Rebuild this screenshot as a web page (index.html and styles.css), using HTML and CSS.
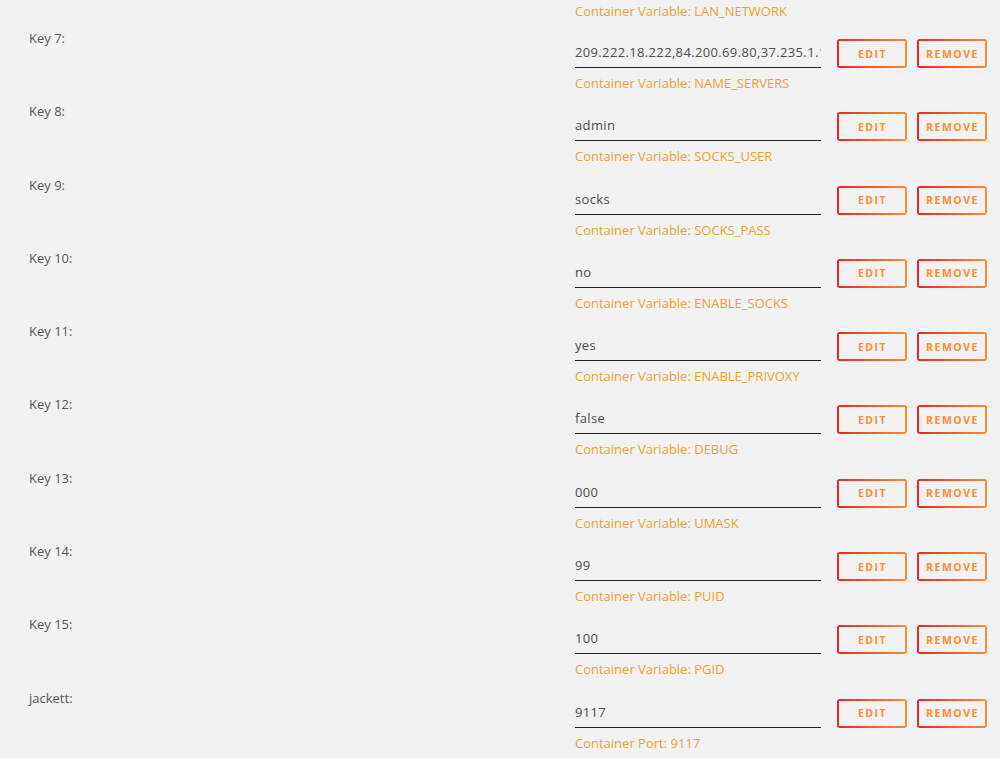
FILE: index.html
```html
<!DOCTYPE html>
<html>

<head>
    <meta charset="UTF-8">
    <link rel="stylesheet" href="styles.css">
</head>

<body>
    <div class="settings">
        <div class="row first">
            <span class="label"></span>
            <div class="field">
                <p class="hint">Container Variable: LAN_NETWORK</p>
            </div>
        </div>

        <div class="row">
            <span class="label">Key 7:</span>
            <div class="field">
                <div class="controls">
                    <input type="text" value="209.222.18.222,84.200.69.80,37.235.1.174,37.235.1.177">
                    <button>Edit</button>
                    <button>Remove</button>
                </div>
                <p class="hint">Container Variable: NAME_SERVERS</p>
            </div>
        </div>

        <div class="row">
            <span class="label">Key 8:</span>
            <div class="field">
                <div class="controls">
                    <input type="text" value="admin">
                    <button>Edit</button>
                    <button>Remove</button>
                </div>
                <p class="hint">Container Variable: SOCKS_USER</p>
            </div>
        </div>

        <div class="row">
            <span class="label">Key 9:</span>
            <div class="field">
                <div class="controls">
                    <input type="text" value="socks">
                    <button>Edit</button>
                    <button>Remove</button>
                </div>
                <p class="hint">Container Variable: SOCKS_PASS</p>
            </div>
        </div>

        <div class="row">
            <span class="label">Key 10:</span>
            <div class="field">
                <div class="controls">
                    <input type="text" value="no">
                    <button>Edit</button>
                    <button>Remove</button>
                </div>
                <p class="hint">Container Variable: ENABLE_SOCKS</p>
            </div>
        </div>

        <div class="row">
            <span class="label">Key 11:</span>
            <div class="field">
                <div class="controls">
                    <input type="text" value="yes">
                    <button>Edit</button>
                    <button>Remove</button>
                </div>
                <p class="hint">Container Variable: ENABLE_PRIVOXY</p>
            </div>
        </div>

        <div class="row">
            <span class="label">Key 12:</span>
            <div class="field">
                <div class="controls">
                    <input type="text" value="false">
                    <button>Edit</button>
                    <button>Remove</button>
                </div>
                <p class="hint">Container Variable: DEBUG</p>
            </div>
        </div>

        <div class="row">
            <span class="label">Key 13:</span>
            <div class="field">
                <div class="controls">
                    <input type="text" value="000">
                    <button>Edit</button>
                    <button>Remove</button>
                </div>
                <p class="hint">Container Variable: UMASK</p>
            </div>
        </div>

        <div class="row">
            <span class="label">Key 14:</span>
            <div class="field">
                <div class="controls">
                    <input type="text" value="99">
                    <button>Edit</button>
                    <button>Remove</button>
                </div>
                <p class="hint">Container Variable: PUID</p>
            </div>
        </div>

        <div class="row">
            <span class="label">Key 15:</span>
            <div class="field">
                <div class="controls">
                    <input type="text" value="100">
                    <button>Edit</button>
                    <button>Remove</button>
                </div>
                <p class="hint">Container Variable: PGID</p>
            </div>
        </div>

        <div class="row">
            <span class="label">jackett:</span>
            <div class="field">
                <div class="controls">
                    <input type="text" value="9117">
                    <button>Edit</button>
                    <button>Remove</button>
                </div>
                <p class="hint">Container Port: 9117</p>
            </div>
        </div>
    </div>
</body>

</html>
```

FILE: styles.css
```css
body {
    margin: 0;
    background-color: #f2f2f2;
    font-family: "Open Sans", "Liberation Sans", sans-serif;
    font-size: 13px;
    color: #555;
}

.settings {
    overflow: hidden;
}

.row {
    display: grid;
    grid-template-columns: 546px 1fr;
    padding: 0 0 10.3px 29px;
}

.row.first {
    padding-top: 2px;
    padding-bottom: 9px;
}

.row.first .field {
    padding-top: 0;
}

.label {
    line-height: 18px;
    color: #555;
}

.field {
    padding-top: 10px;
}

.controls {
    display: flex;
    align-items: flex-start;
    height: 29px;
}

.controls input {
    width: 246px;
    height: 29px;
    box-sizing: border-box;
    margin: 0 16px 0 0;
    padding: 0 0 2px 0;
    border: none;
    border-bottom: 1px solid #222;
    background: transparent;
    font-family: "Open Sans", "Liberation Sans", sans-serif;
    font-size: 13px;
    letter-spacing: 0.35px;
    color: #4a4a4a;
    outline: none;
}

.controls button {
    width: 70px;
    height: 29px;
    margin: 0 10px 0 0;
    padding: 0 0 0 1px;
    border: none;
    border-radius: 3px;
    background:
        linear-gradient(90deg, #e22828, #ff8c2f) top left / 100% 2px no-repeat,
        linear-gradient(90deg, #e22828, #ff8c2f) bottom left / 100% 2px no-repeat,
        linear-gradient(#e22828, #e22828) top left / 2px 100% no-repeat,
        linear-gradient(#ff8c2f, #ff8c2f) top right / 2px 100% no-repeat;
    font-family: "Open Sans", "Liberation Sans", sans-serif;
    font-size: 10.5px;
    font-weight: bold;
    letter-spacing: 1.5px;
    text-transform: uppercase;
    color: #ff8c2f;
    cursor: pointer;
}

.hint {
    margin: 6px 0 0 0;
    line-height: 18px;
    color: #f0a02c;
}

.row.first .hint {
    margin-top: 0;
}
```
